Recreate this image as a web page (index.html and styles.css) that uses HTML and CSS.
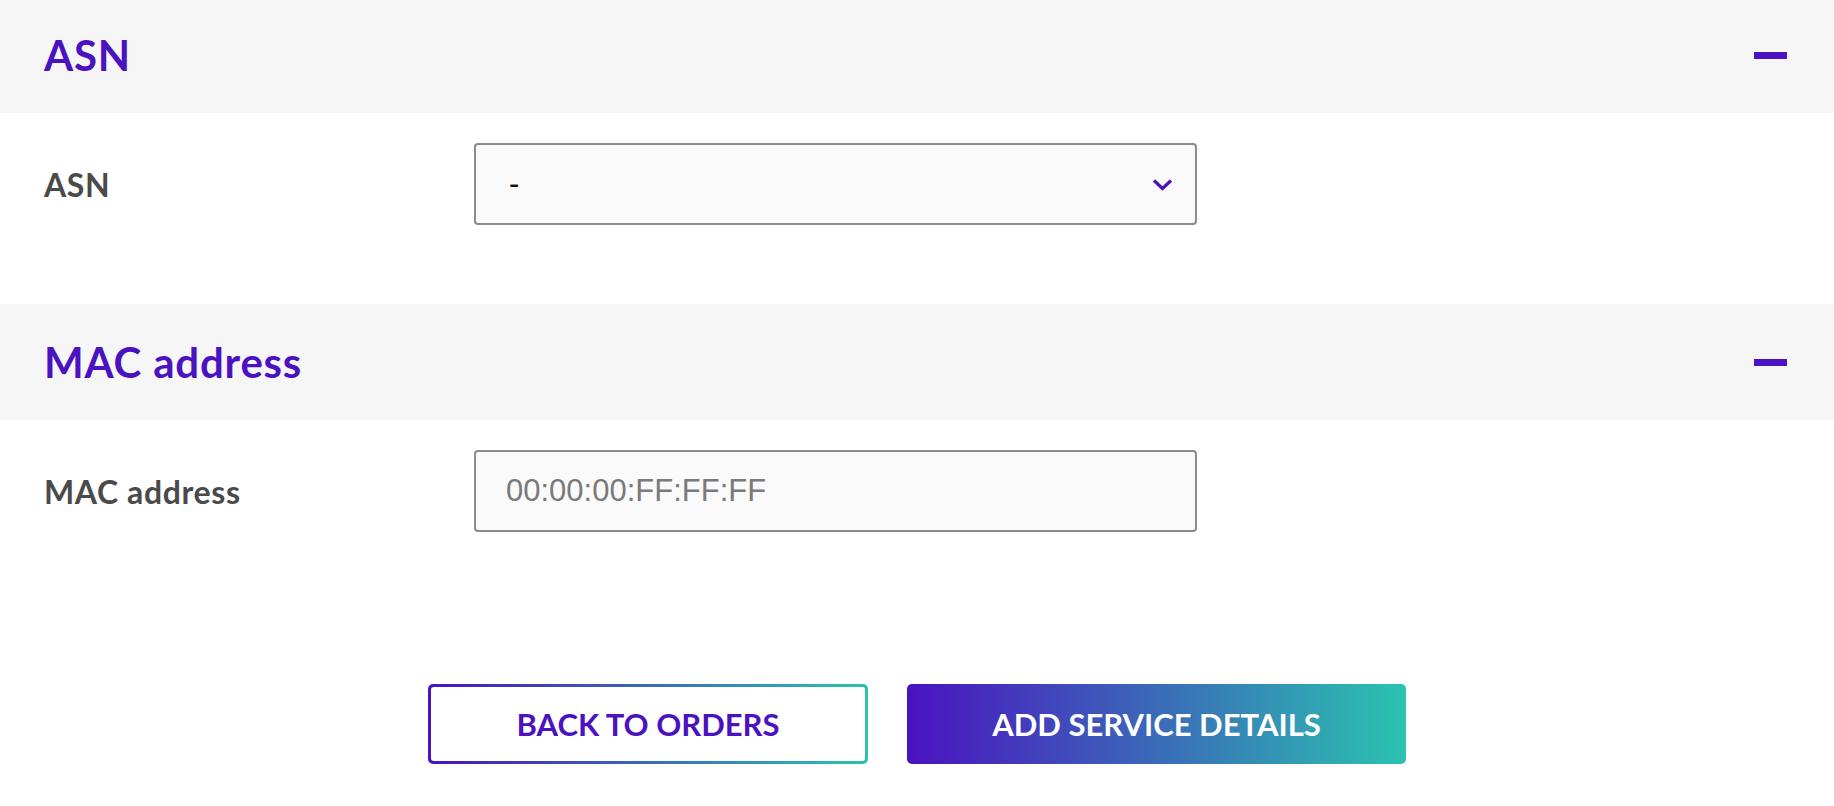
FILE: index.html
```html
<!DOCTYPE html>
<html lang="en">
<head>
  <meta charset="UTF-8">
  <meta name="viewport" content="width=device-width, initial-scale=1.0">
  <title>Service details</title>
  <link rel="stylesheet" href="styles.css">
</head>
<body>
  <div class="page">
    <!-- ASN -->
    <section class="panel">
      <div class="panel-head">
        <h2>ASN</h2>
        <span class="toggle"></span>
      </div>
      <div class="panel-body">
        <div class="field">
          <label for="asn">ASN</label>
          <div class="select" id="asn">
            <span>-</span>
            <svg width="21" height="13" viewBox="0 0 21 13"><path d="M2 2.5 L10.5 10.5 L19 2.5" fill="none" stroke="#4a12c0" stroke-width="3.2"/></svg>
          </div>
        </div>
      </div>
    </section>

    <!-- MAC address -->
    <section class="panel">
      <div class="panel-head">
        <h2>MAC address</h2>
        <span class="toggle"></span>
      </div>
      <div class="panel-body">
        <div class="field">
          <label for="mac">MAC address</label>
          <input type="text" id="mac" class="input" placeholder="00:00:00:FF:FF:FF">
        </div>
      </div>
    </section>

    <div class="actions">
      <button class="btn btn-outline"><span>BACK TO ORDERS</span></button>
      <button class="btn btn-primary">ADD SERVICE DETAILS</button>
    </div>
  </div>
</body>
</html>
```

FILE: styles.css
```css
body {
  margin: 0;
  font-family: Lato, "Open Sans", sans-serif;
  background-color: #fff;
  color: #4a4a4a;
  overflow: hidden;
}

.page {
  margin-top: -3px;
}

.panel-head {
  height: 116px;
  padding: 0 47px 0 44px;
  background-color: #f6f6f6;
  display: flex;
  align-items: center;
  justify-content: space-between;
}

.panel-head h2 {
  margin: 0;
  font-size: 42px;
  font-weight: 700;
  letter-spacing: 0.8px;
  color: #4a12c0;
}

.toggle {
  width: 33px;
  height: 7px;
  background-color: #4a12c0;
}

.panel-body {
  padding: 30px 44px 79px;
}

.field {
  display: flex;
  align-items: center;
}

.field label {
  width: 430px;
  font-size: 32px;
  font-weight: 700;
  letter-spacing: 0.6px;
  color: #4a4a4a;
}

.select, .input {
  box-sizing: border-box;
  width: 723px;
  height: 82px;
  border: 2px solid #8c8c8c;
  border-radius: 4px;
  background-color: #fafafa;
  font-family: "Liberation Sans", Arial, sans-serif;
  font-size: 31px;
  color: #111;
}

.select {
  display: flex;
  align-items: center;
  justify-content: space-between;
  padding: 0 22px 0 33px;
}

.input {
  padding: 0 30px;
  outline: none;
}

.input::placeholder {
  color: #7a7a7a;
}

.actions {
  display: flex;
  justify-content: center;
  gap: 39px;
  margin-top: 73px;
}

.btn {
  box-sizing: border-box;
  height: 80px;
  border-radius: 5px;
  font-family: Lato, sans-serif;
  font-size: 31px;
  font-weight: 700;
  cursor: pointer;
}

.btn-outline {
  width: 440px;
  padding: 3px;
  border: none;
  background: linear-gradient(90deg, #4a12c0, #2bc3b0);
}

.btn-outline span {
  display: flex;
  align-items: center;
  justify-content: center;
  height: 100%;
  border-radius: 3px;
  background-color: #fff;
  color: #4a12c0;
}

.btn-primary {
  width: 499px;
  border: none;
  background: linear-gradient(90deg, #4a12c0, #2bc3b0);
  color: #fff;
}
```
